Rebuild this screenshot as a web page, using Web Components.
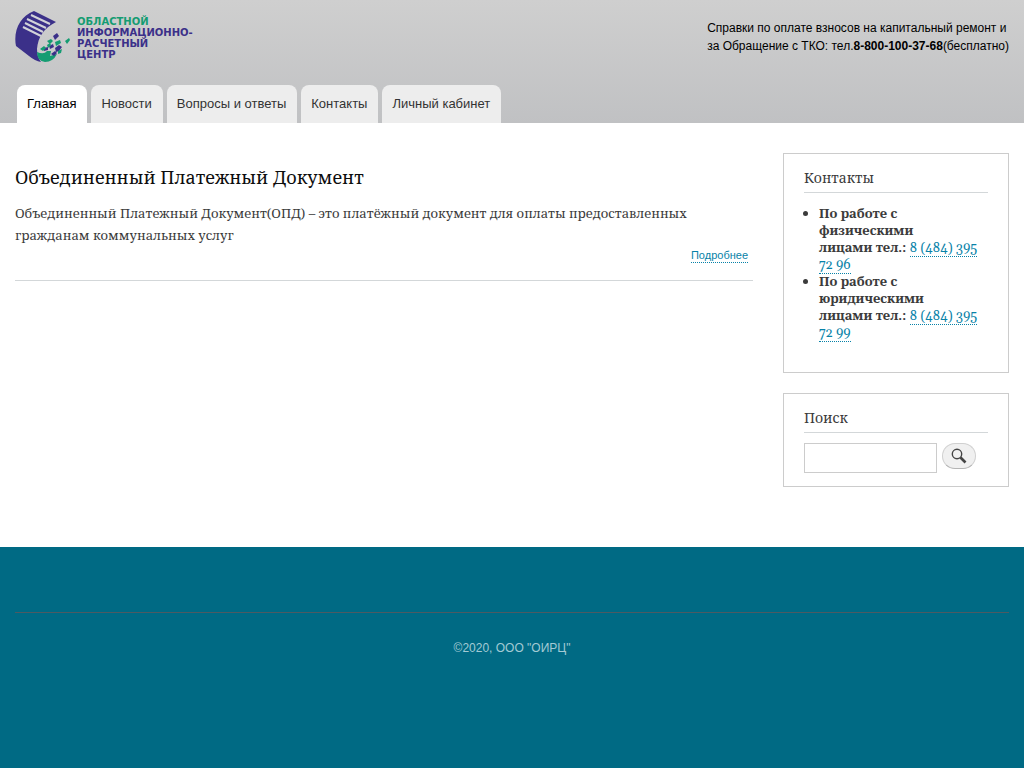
<!DOCTYPE html>
<html lang="ru">
<head>
<meta charset="utf-8">
<title>Областной информационно-расчетный центр</title>
<style>
html{background:#006a84}
body{margin:0;font-family:"Noto Serif","Droid Serif","Liberation Serif",serif;color:#3b3b3b}
</style>
</head>
<body>
<oirc-page></oirc-page>
<script>
function define(name, html) {
  const template = document.createElement('template');
  template.innerHTML = html;
  customElements.define(name, class extends HTMLElement {
    constructor() {
      super();
      this.attachShadow({mode: 'open'}).append(template.content.cloneNode(true));
    }
  });
}

define('oirc-logo', `
<style>
:host{display:block}
a{display:flex;align-items:flex-start;gap:7px;text-decoration:none;color:#3b3089;font:bold 10px/11px "DejaVu Sans",sans-serif}
svg{display:block;flex:none}
.name{padding-top:5px}
.name span{display:block;white-space:nowrap}
.name .top{color:#149c72}
</style>
<a href="#">
  <svg width="55" height="52" viewBox="0 0 55 52" aria-hidden="true">
    <path fill="#3b3089" d="M19 0 41 11C29 17 23 26 22 38Q22 46 26 51 20 50 14 45L1 35C-2 20 5 5 19 0z"/>
    <path stroke="#d2d3d9" stroke-width="2" fill="none" d="M16 4 35 13M12 8 31 17M10 12 28 21M8 16 26 25"/>
    <path fill="#149c72" d="M22 41Q29 44 32 40L36 40 35 45 42 43Q38 51 30 51 22 50 22 41z"/>
    <path fill="#3b3089" d="M38 25l4-3 2 3-4 4zM34 35l4-2 1 3-4 2zM40 37l4-3 3 2-3 4-3 1zM29 37l4-1 0 3-4 1zM36 43l4-3 2 2-3 3z"/>
    <path fill="#149c72" d="M32 30l4-2 2 2-3 3zM40 31l5-2 1 3-5 3zM25 38l4-3 2 2-3 3zM32 34l3-2 1 2-3 3zM43 40l4-2-1 4-3 1zM50 30l4-3 1 2-3 4z"/>
  </svg>
  <span class="name"><span class="top">ОБЛАСТНОЙ</span><span>ИНФОРМАЦИОННО-</span><span>РАСЧЕТНЫЙ</span><span>ЦЕНТР</span></span>
</a>`);

define('oirc-tab', `
<style>
:host{display:block}
a{display:block;padding:0 11px 0 10px;border-radius:8px 8px 0 0;background:#ededed;color:#333;font:13px/38px "Liberation Sans",Arial,sans-serif;text-decoration:none;white-space:nowrap}
:host([active]) a{background:#fff;color:#000}
</style>
<a href="#"><slot></slot></a>`);

define('oirc-header', `
<style>
:host{display:block;padding:0 15px;background:linear-gradient(#cfcfcf,#c0c1c3)}
.bar{display:flex;justify-content:space-between;align-items:flex-start;min-height:74px;padding-top:11px}
p{margin:0;padding-top:8px;font:12px/18px "Liberation Sans",Arial,sans-serif;color:#000}
nav{display:flex;gap:4px;padding:0 2px}
</style>
<header>
  <div class="bar">
    <oirc-logo></oirc-logo>
    <p>Справки по оплате взносов на капитальный ремонт и<br>за Обращение с ТКО: тел.<b>8-800-100-37-68</b>(бесплатно)</p>
  </div>
  <nav><oirc-tab active>Главная</oirc-tab><oirc-tab>Новости</oirc-tab><oirc-tab>Вопросы и ответы</oirc-tab><oirc-tab>Контакты</oirc-tab><oirc-tab>Личный кабинет</oirc-tab></nav>
</header>`);

define('oirc-article', `
<style>
:host{display:block;padding-top:11px;border-bottom:1px solid #d3d7d9}
h2{margin:0 0 12px;font-weight:400;font-size:18px;line-height:26px;color:#0d0d0d}
p{margin:0;font-size:13px;line-height:22px}
.more{display:flex;justify-content:flex-end;padding:3px 5px 17px;font:11px/13px "Liberation Sans",Arial,sans-serif}
a{color:#0782a8;text-decoration:none;border-bottom:1px dotted}
</style>
<article>
  <h2><slot name="title"></slot></h2>
  <p><slot></slot></p>
  <div class="more"><a href="#">Подробнее</a></div>
</article>`);

define('oirc-block', `
<style>
:host{display:block;border:1px solid #ccc;padding:15px 20px 13px}
h2{margin:0 0 10px;padding-bottom:5px;border-bottom:1px solid #d3d7d9;font-weight:400;font-size:14px;line-height:18px}
</style>
<h2><slot name="title"></slot></h2>
<slot></slot>`);

define('oirc-phones', `
<style>
:host{display:block}
ul{margin:0;padding:2px 0 18px 15px;font-size:13px;line-height:17px}
a{color:#0782a8;text-decoration:none;border-bottom:1px dotted;font-family:Gelasio,Georgia,serif;font-size:13px;line-height:13px}
</style>
<ul>
  <li><b>По работе с физическими лицами&nbsp;тел.:</b> <a href="tel:84843957296">8 (484) 395 72 96</a></li>
  <li><b>По работе с юридическими лицами&nbsp;тел.:</b> <a href="tel:84843957299">8 (484) 395 72 99</a></li>
</ul>`);

define('oirc-search', `
<style>
:host{display:block}
form{display:flex;align-items:flex-start;gap:5px;margin:0;padding-right:12px}
input{box-sizing:border-box;flex:1;min-width:0;height:30px;margin:0;padding:4px;border:1px solid #ccc;background:#fff;font:14px "Liberation Sans",sans-serif}
button{box-sizing:border-box;display:flex;justify-content:center;align-items:center;width:34px;height:26px;padding:0;border:1px solid #d0d0d0;border-bottom-color:#b4b4b4;border-radius:13px;background:#f0f0f0}
</style>
<form role="search">
  <input type="search" aria-label="Поиск">
  <button type="button" aria-label="Найти"><svg width="16" height="16" viewBox="0 0 16 16" fill="none" stroke="#444"><circle cx="6" cy="6" r="4.7" stroke-width="1.4"/><path d="M9.5 9.5 14.5 14.5" stroke-width="2.6"/></svg></button>
</form>`);

define('oirc-footer', `
<style>
:host{display:block;padding:65px 15px 0;background:#006a84}
p{margin:0;padding:26px 0;border-top:1px solid #4d5a62;text-align:center;font:12px/18px "Liberation Sans",Arial,sans-serif;color:#a3cad4}
</style>
<footer><p>©2020, ООО "ОИРЦ"</p></footer>`);

define('oirc-page', `
<style>
:host{display:block}
main{display:grid;grid-template-columns:minmax(0,1fr) 226px;gap:30px;align-items:start;padding:30px 15px 60px;background:#fff}
aside{display:grid;grid-template-columns:minmax(0,1fr);gap:20px}
</style>
<oirc-header></oirc-header>
<main>
  <oirc-article><span slot="title">Объединенный Платежный Документ</span>Объединенный Платежный Документ(ОПД) – это платёжный документ для оплаты предоставленных гражданам коммунальных услуг</oirc-article>
  <aside>
    <oirc-block><span slot="title">Контакты</span><oirc-phones></oirc-phones></oirc-block>
    <oirc-block><span slot="title">Поиск</span><oirc-search></oirc-search></oirc-block>
  </aside>
</main>
<oirc-footer></oirc-footer>`);
</script>
</body>
</html>
